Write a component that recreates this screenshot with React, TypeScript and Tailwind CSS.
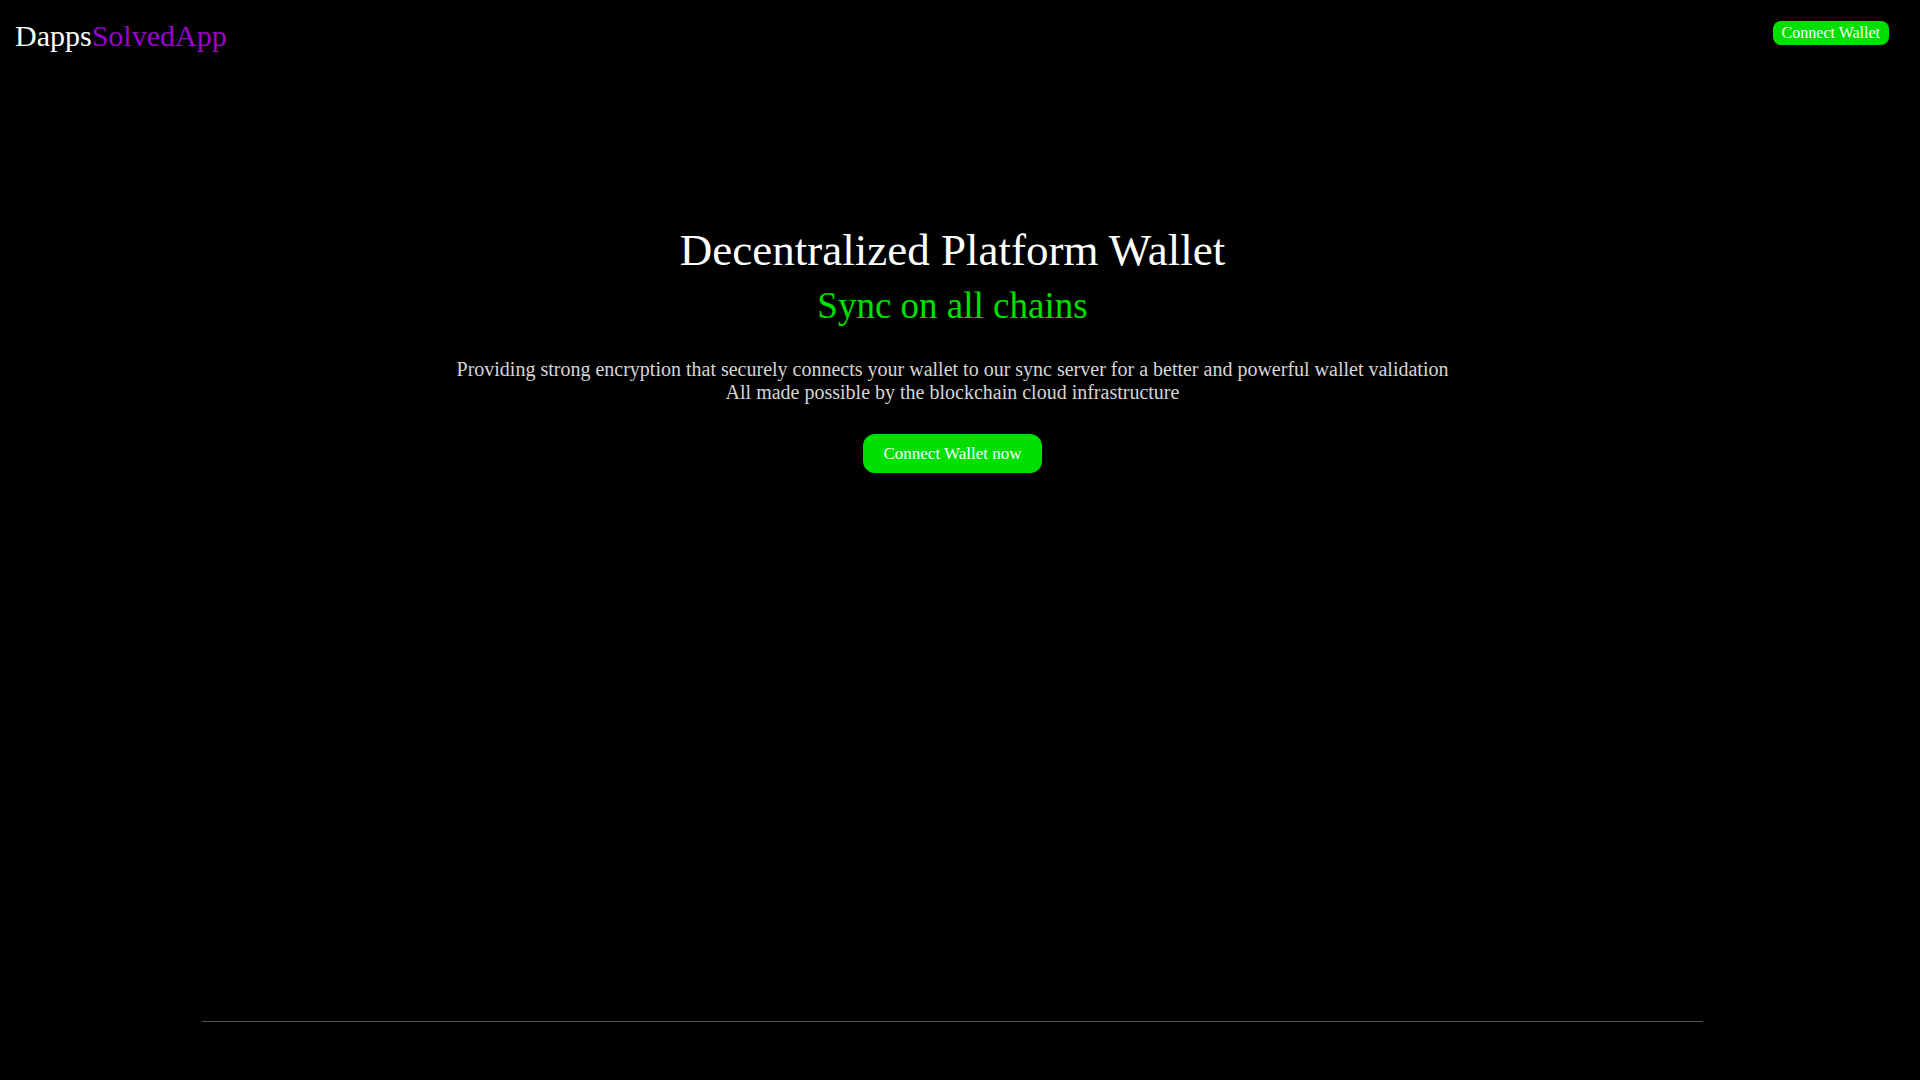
export default function App() {
  return (
    <div className="h-screen overflow-y-scroll bg-black pr-[15px] text-white font-['Liberation_Serif','Times_New_Roman',serif]">
      {/* top bar */}
      <header className="flex items-start justify-between pl-[15px] pr-4 pt-[19px]">
        <a href="#" className="text-[30px] leading-[1.15]">
          <span className="text-white">Dapps</span>
          <span className="text-[#9d00d4]">SolvedApp</span>
        </a>
        <button className="mt-[2px] rounded-lg bg-[#00e000] px-[9px] py-[3px] text-[16px] leading-[1.15] text-white">
          Connect Wallet
        </button>
      </header>

      {/* hero */}
      <section className="flex h-[967px] flex-col items-center pt-[171px] text-center">
        <h1 className="text-[45px] leading-[1.15]">Decentralized Platform Wallet</h1>
        <h2 className="mt-[9px] text-[37px] leading-[1.15] text-[#00e000]">Sync on all chains</h2>
        <p className="mt-[30px] text-[20px] leading-[1.16] text-[#d6d6d6]">
          Providing strong encryption that securely connects your wallet to our sync server for a better and powerful
          wallet validation
          <br />
          All made possible by the blockchain cloud infrastructure
        </p>
        <button className="mt-[30px] h-[39px] w-[179px] rounded-xl bg-[#00e000] text-[17px] leading-[1.15] text-white">
          Connect Wallet now
        </button>
      </section>

      {/* lower content */}
      <div className="mx-auto w-[1501px] border-t border-[#505050]" />
      <section className="h-[1700px]" />
    </div>
  );
}
